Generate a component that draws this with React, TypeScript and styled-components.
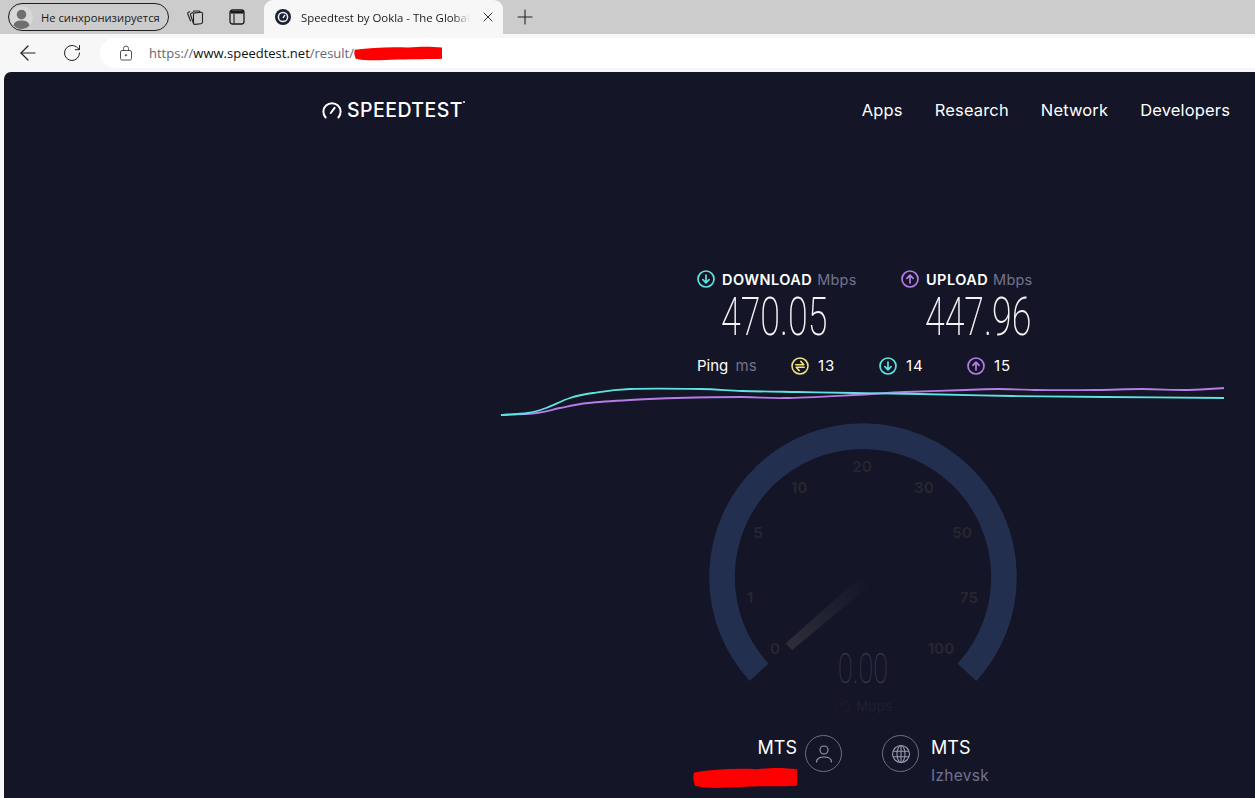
import { ArrowLeft, Plus, RotateCw, X } from "lucide-react";
import styled, { createGlobalStyle } from "styled-components";

const COLORS = {
  page: "#141526",
  cyan: "#5fe3e0",
  purple: "#b67de8",
  yellow: "#f2e27a",
  muted: "#72748c",
};

const CYAN_LINE = [
  [501, 415], [528, 413], [546, 408], [570, 398], [593, 393], [630, 389], [700, 389], [742, 391],
  [798, 392], [854, 393], [919, 394], [1012, 396], [1105, 397], [1224, 398],
];
const PURPLE_LINE = [
  [501, 415], [537, 413], [560, 408], [588, 403], [630, 400], [677, 398], [742, 397], [784, 398],
  [854, 395], [905, 392], [965, 390], [998, 389], [1035, 390], [1096, 390], [1142, 389], [1189, 390], [1224, 388],
];

const GAUGE_TICKS = [
  ["0", 66, 232], ["1", 41, 181], ["5", 49, 116], ["10", 90, 71], ["20", 153, 50],
  ["30", 215, 71], ["50", 253, 116], ["75", 260, 181], ["100", 232, 232],
] as const;

// smooth line through the points (catmull-rom to bezier), offset to the chart's corner
const toPath = (points: number[][], ox: number, oy: number) => {
  const pts = points.map(([x, y]) => [x - ox, y - oy]);
  let d = `M${pts[0][0]} ${pts[0][1]}`;
  for (let i = 0; i < pts.length - 1; i++) {
    const p0 = pts[Math.max(i - 1, 0)];
    const p1 = pts[i];
    const p2 = pts[i + 1];
    const p3 = pts[Math.min(i + 2, pts.length - 1)];
    const c1 = [p1[0] + (p2[0] - p0[0]) / 6, p1[1] + (p2[1] - p0[1]) / 6];
    const c2 = [p2[0] - (p3[0] - p1[0]) / 6, p2[1] - (p3[1] - p1[1]) / 6];
    d += ` C${c1[0].toFixed(1)} ${c1[1].toFixed(1)} ${c2[0].toFixed(1)} ${c2[1].toFixed(1)} ${p2[0]} ${p2[1]}`;
  }
  return d;
};

const RoundArrow = ({ color, up }: { color: string; up?: boolean }) => (
  <svg width="18" height="18" viewBox="0 0 18 18" fill="none" stroke={color} strokeWidth="1.7">
    <circle cx="9" cy="9" r="8" />
    {up ? (
      <path d="M9 13V5.4M5.9 8.4 9 5.2l3.1 3.2" strokeLinecap="round" strokeLinejoin="round" />
    ) : (
      <path d="M9 5v7.6M5.9 9.6 9 12.8l3.1-3.2" strokeLinecap="round" strokeLinejoin="round" />
    )}
  </svg>
);

const PingIcon = () => (
  <svg width="18" height="18" viewBox="0 0 18 18" fill="none" stroke={COLORS.yellow} strokeWidth="1.6">
    <circle cx="9" cy="9" r="8" />
    <path d="M4.8 7.8h8L9.8 4.4M13.2 10.2h-8l3 3.4" strokeLinecap="round" strokeLinejoin="round" />
  </svg>
);

const Scribble = ({ width, height }: { width: number; height: number }) => (
  <svg width={width} height={height} viewBox="0 0 100 20" preserveAspectRatio="none">
    <path d="M1 5C20 2 40 1 62 2 78 0 90 1 100 2V17C85 18 70 17 50 18 30 19 12 20 2 17 0 12 0 8 1 5Z" fill="#ff0000" />
  </svg>
);

const App = () => {
  return (
    <>
      <GlobalStyle />
      <Window>
        <TabStrip>
          <Profile>
            <Avatar>
              <svg width="23" height="23" viewBox="0 0 23 23">
                <circle cx="11.5" cy="11.5" r="11.5" fill="#d8d8d8" />
                <circle cx="11.5" cy="8.6" r="4.8" fill="#6f6f6f" />
                <path d="M3.4 19.4C4.4 15.4 7.6 14.4 11.5 14.4s7.1 1 8.1 5c-2 2.2-5 3.600-8.1 3.600s-6.1-1.400-8.1-3.600Z" fill="#6f6f6f" />
              </svg>
            </Avatar>
            Не синхронизируется
          </Profile>
          <StripIcon>
            <svg width="18" height="18" viewBox="0 0 18 18" fill="none" stroke="#222" strokeWidth="1.1">
              <rect x="7.5" y="4.800" width="9" height="11.500" rx="1.500" transform="skewY(-6) translate(0 1)" />
              <path d="M7 4.500 5 5.500a1 1 0 0 0-.5 1.300L7.500 15.500M4 3.500 2.200 4.500a1 1 0 0 0-.5 1.300l3 7.500M7 4.500l1-1.500h5l1.500 1.500" />
            </svg>
          </StripIcon>
          <StripIcon>
            <svg width="16" height="16" viewBox="0 0 16 16" fill="none" stroke="#1a1a1a">
              <rect x="1" y="1" width="14" height="14" rx="2.500" strokeWidth="1.3" />
              <path d="M1.500 3.300h13" strokeWidth="2.600" />
              <path d="M5 5v9.500" strokeWidth="1.100" />
            </svg>
          </StripIcon>
          <ActiveTab>
            <svg width="16" height="16" viewBox="0 0 16 16" fill="none">
              <circle cx="8" cy="8" r="8" fill="#1d2233" />
              <circle cx="8" cy="8" r="4.600" stroke="#eef0f5" strokeWidth="1.500" />
              <path d="M8 8.800 10 5.800" stroke="#eef0f5" strokeWidth="1.500" />
            </svg>
            <TabTitle>Speedtest by Ookla - The Global</TabTitle>
            <X size={16} strokeWidth={1.4} color="#222" />
          </ActiveTab>
          <NewTab>
            <Plus size={24} strokeWidth={1.1} color="#222" />
          </NewTab>
        </TabStrip>

        <Toolbar>
          <ToolbarButton>
            <ArrowLeft size={24} strokeWidth={1.2} color="#222" />
          </ToolbarButton>
          <ToolbarButton>
            <RotateCw size={20} strokeWidth={1.2} color="#222" />
          </ToolbarButton>
          <AddressBar>
            <svg width="14" height="16" viewBox="0 0 14 16" fill="none" stroke="#555" strokeWidth="1">
              <rect x="1.500" y="5.500" width="11" height="9.500" rx="1.500" />
              <path d="M4.500 5.500V3.500a2.500 2.500 0 0 1 5 0v2" />
              <circle cx="7" cy="10.300" r=".7" fill="#555" />
            </svg>
            <Url>
              https://<b>www.speedtest.net</b>/result/
              <Scribble width={88} height={15} />
            </Url>
          </AddressBar>
        </Toolbar>

        <Page>
          <Header>
            <Logo>
              <svg width="20" height="18" viewBox="0 0 20 18" fill="none" stroke="#fff" strokeWidth="2">
                <path d="M3.600 16.500A8.600 8.600 0 1 1 16.400 16.500" strokeLinecap="round" />
                <path d="M8.800 12 12.600 6.800" strokeLinecap="round" />
              </svg>
              <LogoText>SPEEDTEST</LogoText>
              <TradeMark />
            </Logo>
            <Nav>
              <NavLink>Apps</NavLink>
              <NavLink>Research</NavLink>
              <NavLink>Network</NavLink>
              <NavLink>Developers</NavLink>
            </Nav>
          </Header>

          <Stats>
            <Speeds>
              <Speed>
                <SpeedLabel>
                  <RoundArrow color={COLORS.cyan} />
                  <strong>DOWNLOAD</strong>
                  <span>Mbps</span>
                </SpeedLabel>
                <SpeedValue>470.05</SpeedValue>
              </Speed>
              <Speed>
                <SpeedLabel>
                  <RoundArrow color={COLORS.purple} up />
                  <strong>UPLOAD</strong>
                  <span>Mbps</span>
                </SpeedLabel>
                <SpeedValue>447.96</SpeedValue>
              </Speed>
            </Speeds>
            <PingRow>
              <PingLabel>
                Ping <span>ms</span>
              </PingLabel>
              <PingItem>
                <PingIcon />
                13
              </PingItem>
              <PingItem>
                <RoundArrow color={COLORS.cyan} />
                14
              </PingItem>
              <PingItem>
                <RoundArrow color={COLORS.purple} up />
                15
              </PingItem>
            </PingRow>
          </Stats>

          <Chart width="730" height="47" viewBox="0 0 730 47" fill="none" strokeWidth="1.8">
            <path d={toPath(PURPLE_LINE, 500, 375)} stroke={COLORS.purple} />
            <path d={toPath(CYAN_LINE, 500, 375)} stroke={COLORS.cyan} />
          </Chart>

          <Gauge width="310" height="305" viewBox="0 0 310 305" fill="none">
            <defs>
              <linearGradient id="needle" x1="80" y1="225" x2="155" y2="155" gradientUnits="userSpaceOnUse">
                <stop offset="0" stopColor="#2d2e39" />
                <stop offset="1" stopColor="#141526" />
              </linearGradient>
            </defs>
            <path d="M50 250.300A141 141 0 1 1 258 250.300" stroke="#222f4f" strokeWidth="25.6" />
            <path d="M76.500 221.500 83.200 228 164 161 157 150Z" fill="url(#needle)" />
            {GAUGE_TICKS.map(([label, x, y]) => (
              <GaugeTick key={label} x={x} y={y} textAnchor="middle">
                {label}
              </GaugeTick>
            ))}
            <GaugeValue x="129" y="261" textLength="50" lengthAdjust="spacingAndGlyphs">
              0.00
            </GaugeValue>
            <circle cx="133.500" cy="284" r="6.500" stroke="#20182f" strokeWidth="1.2" />
            <path d="M133.500 287.500v-6.500M131 283l2.500-2.500 2.500 2.500" stroke="#20182f" strokeWidth="1.2" />
            <GaugeUnit x="147" y="289">
              Mbps
            </GaugeUnit>
          </Gauge>

          <Provider>
            <ProviderSide $right>
              <ProviderName>MTS</ProviderName>
              <Scribble width={104} height={22} />
            </ProviderSide>
            <ProviderIcon>
              <svg width="20" height="20" viewBox="0 0 20 20" fill="none" stroke="#9a9cb0" strokeWidth="1.1">
                <circle cx="10" cy="6" r="4" />
                <path d="M2.500 18c0-3.500 3-5 7.500-5s7.500 1.500 7.500 5" strokeLinecap="round" />
              </svg>
            </ProviderIcon>
            <ProviderIcon>
              <svg width="20" height="20" viewBox="0 0 20 20" fill="none" stroke="#9a9cb0" strokeWidth="1.1">
                <circle cx="10" cy="10" r="8.500" />
                <ellipse cx="10" cy="10" rx="4" ry="8.500" />
                <path d="M2 7.300h16M2 12.700h16M10 1.500v17" />
              </svg>
            </ProviderIcon>
            <ProviderSide>
              <ProviderName>MTS</ProviderName>
              <ProviderCity>Izhevsk</ProviderCity>
            </ProviderSide>
          </Provider>
        </Page>
      </Window>
    </>
  );
};

export default App;

const GlobalStyle = createGlobalStyle`
  html, body {
    margin: 0;
    padding: 0;
    background: #f7f7f7;
  }
  * {
    box-sizing: border-box;
  }
`;

const Window = styled.div`
  width: 1255px;
  height: 798px;
  overflow: hidden;
  background: #f7f7f7;
  font-family: "Inter", sans-serif;
`;

const TabStrip = styled.div`
  height: 34px;
  background: #cccccc;
  display: flex;
  align-items: flex-end;
  padding-left: 8px;
`;

const Profile = styled.div`
  width: 161px;
  height: 28px;
  margin-bottom: 3px;
  border: 1px solid #1e1e1e;
  border-radius: 14px;
  display: flex;
  align-items: center;
  gap: 8px;
  padding-left: 1px;
  font: 11.2px "Open Sans", sans-serif;
  color: #1b1b1b;
  white-space: nowrap;
`;

const Avatar = styled.div`
  width: 23px;
  height: 23px;
  border-radius: 50%;
  overflow: hidden;
  display: flex;
`;

const StripIcon = styled.div`
  width: 42px;
  height: 34px;
  margin-left: 5px;
  display: flex;
  align-items: center;
  justify-content: center;
  & + & {
    margin-left: 0;
  }
`;

const ActiveTab = styled.div`
  width: 239px;
  height: 34px;
  margin-left: 6px;
  padding: 0 7px 0 11px;
  background: #f7f7f7;
  border-radius: 9px 9px 0 0;
  display: flex;
  align-items: center;
  gap: 10px;
`;

const TabTitle = styled.div`
  flex: 1;
  white-space: nowrap;
  font: 11.4px "Open Sans", sans-serif;
  color: #1b1b1b;
  -webkit-mask-image: linear-gradient(to right, #000 90%, transparent);
  mask-image: linear-gradient(to right, #000 90%, transparent);
`;

const NewTab = styled.div`
  width: 44px;
  height: 34px;
  display: flex;
  align-items: center;
  justify-content: center;
`;

const Toolbar = styled.div`
  height: 38px;
  display: flex;
  align-items: center;
  padding: 2px 0 2px 6px;
`;

const ToolbarButton = styled.div`
  width: 44px;
  display: flex;
  justify-content: center;
`;

const AddressBar = styled.div`
  flex: 1;
  height: 30px;
  margin-left: 6px;
  padding-left: 19px;
  background: #ffffff;
  border-radius: 15px 0 0 15px;
  display: flex;
  align-items: center;
  gap: 16px;
`;

const Url = styled.div`
  display: flex;
  align-items: center;
  font: 13px "Open Sans", sans-serif;
  color: #667;
  white-space: pre;
  b {
    font-weight: 400;
    color: #111;
  }
`;

const Page = styled.div`
  height: 726px;
  margin-left: 4px;
  background: ${COLORS.page};
  border-top-left-radius: 7px;
  display: flex;
  flex-direction: column;
  color: #fff;
`;

const Header = styled.header`
  display: flex;
  align-items: center;
  justify-content: space-between;
  height: 76px;
  padding: 0 25px 0 318px;
`;

const Logo = styled.div`
  display: flex;
  align-items: center;
  gap: 5px;
  position: relative;
`;

const LogoText = styled.span`
  font-size: 19.5px;
  font-weight: 500;
  letter-spacing: 0.45px;
`;

const TradeMark = styled.i`
  position: absolute;
  right: -2px;
  top: 3px;
  width: 2px;
  height: 2px;
  background: #bbb;
`;

const Nav = styled.nav`
  display: flex;
  gap: 32px;
`;

const NavLink = styled.a`
  font-size: 16.5px;
  letter-spacing: 0.15px;
`;

const Stats = styled.section`
  margin: 122px 0 0 693px;
`;

const Speeds = styled.div`
  display: flex;
`;

const Speed = styled.div`
  width: 204px;
`;

const SpeedLabel = styled.div`
  display: flex;
  align-items: center;
  height: 18px;
  font-size: 14.5px;
  white-space: pre;
  svg {
    margin-right: 7px;
  }
  strong {
    font-weight: 600;
    letter-spacing: 0.45px;
  }
  span {
    margin-left: 5px;
    color: ${COLORS.muted};
    letter-spacing: 0.2px;
  }
`;

const SpeedValue = styled.div`
  width: 160px;
  margin: 0 0 0 24px;
  font: 200 53px/58px "Roboto", sans-serif;
  transform: scaleX(0.675);
  transform-origin: left center;
  color: #f4f4f6;
  white-space: nowrap;
`;

const PingRow = styled.div`
  display: grid;
  grid-template-columns: 94px 88px 88px 88px;
  align-items: center;
  margin-top: 10px;
  font-size: 15px;
`;

const PingLabel = styled.div`
  span {
    color: ${COLORS.muted};
    margin-left: 3px;
  }
`;

const PingItem = styled.div`
  display: flex;
  align-items: center;
  gap: 9px;
  letter-spacing: 1px;
`;

const Chart = styled.svg`
  margin: 0 0 0 496px;
  flex: none;
`;

const Gauge = styled.svg`
  margin: 0 0 0 705px;
  flex: none;
`;

const GaugeTick = styled.text`
  font: 700 15px "Inter", sans-serif;
  fill: #25262f;
`;

const GaugeValue = styled.text`
  font: 100 43px "Roboto", sans-serif;
  fill: #3a3b4a;
`;

const GaugeUnit = styled.text`
  font: 500 13.5px "Inter", sans-serif;
  fill: #1e1f2f;
`;

const Provider = styled.div`
  display: grid;
  grid-template-columns: 104px auto auto 1fr;
  margin: 9px 0 0 689px;
  align-items: start;
`;

const ProviderSide = styled.div<{ $right?: boolean }>`
  display: flex;
  flex-direction: column;
  align-items: ${(p) => (p.$right ? "flex-end" : "flex-start")};
  margin-left: ${(p) => (p.$right ? "0" : "12px")};
  gap: ${(p) => (p.$right ? "7px" : "5px")};
`;

const ProviderName = styled.div`
  font-size: 18px;
  line-height: 24px;
`;

const ProviderCity = styled.div`
  font-size: 15.5px;
  line-height: 22px;
  color: #6f7390;
  letter-spacing: 0.3px;
`;

const ProviderIcon = styled.div`
  width: 37px;
  height: 37px;
  border: 1px solid #6d6f85;
  border-radius: 50%;
  display: flex;
  align-items: center;
  justify-content: center;
  margin: -1px 0 0 8px;
  & + & {
    margin-left: 40px;
  }
`;
